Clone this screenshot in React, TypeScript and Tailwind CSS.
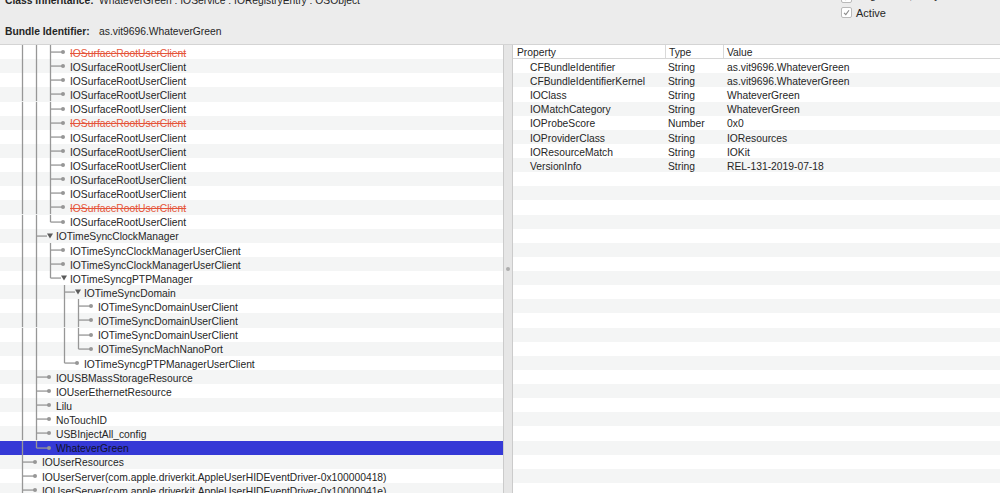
import React from 'react';

const ROW = 14.13;
const LINE = '#979797';

type TreeRow = {
  label: string;
  depth: number;
  guides: number[];
  last?: boolean;
  expanded?: boolean;
  red?: boolean;
  selected?: boolean;
};

const lineX = (depth: number) => 22 + 14 * (depth - 2);
const textX = (depth: number) => 42 + 14 * (depth - 2);

const surface = (red: boolean, last = false): TreeRow => ({
  label: 'IOSurfaceRootUserClient',
  depth: 4,
  guides: [22, 36],
  red,
  last,
});

const rows: TreeRow[] = [
  surface(true),
  surface(false),
  surface(false),
  surface(false),
  surface(false),
  surface(true),
  surface(false),
  surface(false),
  surface(false),
  surface(false),
  surface(false),
  surface(true),
  surface(false, true),
  { label: 'IOTimeSyncClockManager', depth: 3, guides: [22], expanded: true },
  { label: 'IOTimeSyncClockManagerUserClient', depth: 4, guides: [22, 36] },
  { label: 'IOTimeSyncClockManagerUserClient', depth: 4, guides: [22, 36] },
  { label: 'IOTimeSyncgPTPManager', depth: 4, guides: [22, 36], last: true, expanded: true },
  { label: 'IOTimeSyncDomain', depth: 5, guides: [22, 36], expanded: true },
  { label: 'IOTimeSyncDomainUserClient', depth: 6, guides: [22, 36, 64] },
  { label: 'IOTimeSyncDomainUserClient', depth: 6, guides: [22, 36, 64] },
  { label: 'IOTimeSyncDomainUserClient', depth: 6, guides: [22, 36, 64] },
  { label: 'IOTimeSyncMachNanoPort', depth: 6, guides: [22, 36, 64], last: true },
  { label: 'IOTimeSyncgPTPManagerUserClient', depth: 5, guides: [22, 36], last: true },
  { label: 'IOUSBMassStorageResource', depth: 3, guides: [22] },
  { label: 'IOUserEthernetResource', depth: 3, guides: [22] },
  { label: 'Lilu', depth: 3, guides: [22] },
  { label: 'NoTouchID', depth: 3, guides: [22] },
  { label: 'USBInjectAll_config', depth: 3, guides: [22] },
  { label: 'WhateverGreen', depth: 3, guides: [22], last: true, selected: true },
  { label: 'IOUserResources', depth: 2, guides: [] },
  { label: 'IOUserServer(com.apple.driverkit.AppleUserHIDEventDriver-0x100000418)', depth: 2, guides: [] },
  { label: 'IOUserServer(com.apple.driverkit.AppleUserHIDEventDriver-0x10000041e)', depth: 2, guides: [] },
];

const props = [
  ['CFBundleIdentifier', 'String', 'as.vit9696.WhateverGreen'],
  ['CFBundleIdentifierKernel', 'String', 'as.vit9696.WhateverGreen'],
  ['IOClass', 'String', 'WhateverGreen'],
  ['IOMatchCategory', 'String', 'WhateverGreen'],
  ['IOProbeScore', 'Number', '0x0'],
  ['IOProviderClass', 'String', 'IOResources'],
  ['IOResourceMatch', 'String', 'IOKit'],
  ['VersionInfo', 'String', 'REL-131-2019-07-18'],
];

function Guides({ row }: { row: TreeRow }) {
  const w = textX(row.depth);
  const px = lineX(row.depth) + 0.5;
  const mid = ROW / 2;
  const end = row.expanded ? w - 9 : w - 7;
  return (
    <svg width={w} height={ROW} className="shrink-0">
      {row.guides.map((x) => (
        <line key={x} x1={x + 0.5} y1={0} x2={x + 0.5} y2={ROW} stroke={LINE} strokeWidth={1.3} />
      ))}
      <line x1={px} y1={0} x2={px} y2={row.last ? mid : ROW} stroke={LINE} strokeWidth={1.3} />
      <line x1={px} y1={mid} x2={end} y2={mid} stroke={LINE} strokeWidth={1.3} />
      {row.expanded ? (
        <polygon points={`${w - 9},${mid - 2.5} ${w - 3},${mid - 2.5} ${w - 6},${mid + 2.5}`} fill="#5a5a5a" />
      ) : (
        <circle cx={w - 7} cy={mid} r={2} fill={LINE} />
      )}
    </svg>
  );
}

function Checkbox() {
  return (
    <span className="flex h-[11px] w-[11px] shrink-0 items-center justify-center rounded-[2px] border border-[#b9b9b9] bg-white">
      <svg width="7" height="7" viewBox="0 0 7 7">
        <path d="M1 3.8 L2.8 5.6 L6 1.2" fill="none" stroke="#8a8a8a" strokeWidth="1.1" />
      </svg>
    </span>
  );
}

export default function App() {
  return (
    <div
      className="flex h-[493px] w-[1000px] flex-col overflow-hidden bg-[#ececec] text-[10.3px] text-[#262626]"
      style={{ fontFamily: '"Liberation Sans", Arial, sans-serif' }}
    >
      {/* Info header */}
      <div className="flex h-[44px] shrink-0 overflow-hidden">
        <div className="mt-[-6px] flex flex-col gap-[17px]">
          <div className="flex h-[14px] items-center">
            <span className="w-[99px] pl-[5px] font-bold">Class Inheritance:</span>
            <span>WhateverGreen : IOService : IORegistryEntry : OSObject</span>
          </div>
          <div className="flex h-[14px] items-center">
            <span className="w-[99px] pl-[5px] font-bold">Bundle Identifier:</span>
            <span>as.vit9696.WhateverGreen</span>
          </div>
        </div>
        <div className="ml-auto mt-[-8px] flex w-[159px] flex-col gap-[4px]">
          <div className="flex h-[11px] items-start gap-[4px]">
            <Checkbox />
            <span className="mt-[-5px] text-[11px]">Registered, Busy</span>
          </div>
          <div className="flex h-[11px] items-center gap-[4px]">
            <Checkbox />
            <span className="pt-[1px] text-[11px]">Active</span>
          </div>
        </div>
      </div>

      {/* Split body */}
      <div className="flex min-h-0 flex-1 border-t border-[#d4d4d4]">
        {/* Registry tree */}
        <div className="w-[504px] shrink-0 overflow-hidden border-r border-[#cbcbcb] bg-white">
          {rows.map((row, i) => (
            <div
              key={i}
              className={`flex h-[14.13px] items-center whitespace-nowrap ${
                row.selected ? 'bg-[#3539d6]' : i % 2 === 1 ? 'bg-[#f4f5f5]' : 'bg-white'
              }`}
            >
              <Guides row={row} />
              <span
                className={`pt-[3px] ${
                  row.red
                    ? 'text-[#e5553a] line-through'
                    : row.selected
                    ? 'text-[#10122e]'
                    : ''
                }`}
              >
                {row.label}
              </span>
            </div>
          ))}
        </div>

        {/* Splitter */}
        <div className="flex w-[8px] shrink-0 items-center justify-center bg-[#e6e6e6]">
          <span className="h-[4px] w-[4px] rounded-full bg-[#adadad]" />
        </div>

        {/* Property table */}
        <div className="min-w-0 flex-1 overflow-hidden border-l border-[#cbcbcb] bg-white">
          <div className="flex h-[14.13px] items-center border-b border-[#d6d6d6] whitespace-nowrap">
            <span className="w-[152px] pl-[4px] pt-[3px]">Property</span>
            <span className="w-[58px] border-l border-[#d9d9d9] pl-[3px] pt-[2px] leading-[11px]">Type</span>
            <span className="border-l border-[#d9d9d9] pl-[3px] pt-[2px] leading-[11px]">Value</span>
          </div>
          {Array.from({ length: 31 }).map((_, i) => {
            const p = props[i];
            return (
              <div
                key={i}
                className={`flex h-[14.13px] items-center whitespace-nowrap ${
                  i % 2 === 1 ? 'bg-[#f4f5f5]' : 'bg-white'
                }`}
              >
                {p && (
                  <>
                    <span className="w-[152px] pl-[17px] pt-[3px]">{p[0]}</span>
                    <span className="w-[59px] pl-[3px] pt-[3px]">{p[1]}</span>
                    <span className="pl-[3px] pt-[3px]">{p[2]}</span>
                  </>
                )}
              </div>
            );
          })}
        </div>
      </div>
    </div>
  );
}
